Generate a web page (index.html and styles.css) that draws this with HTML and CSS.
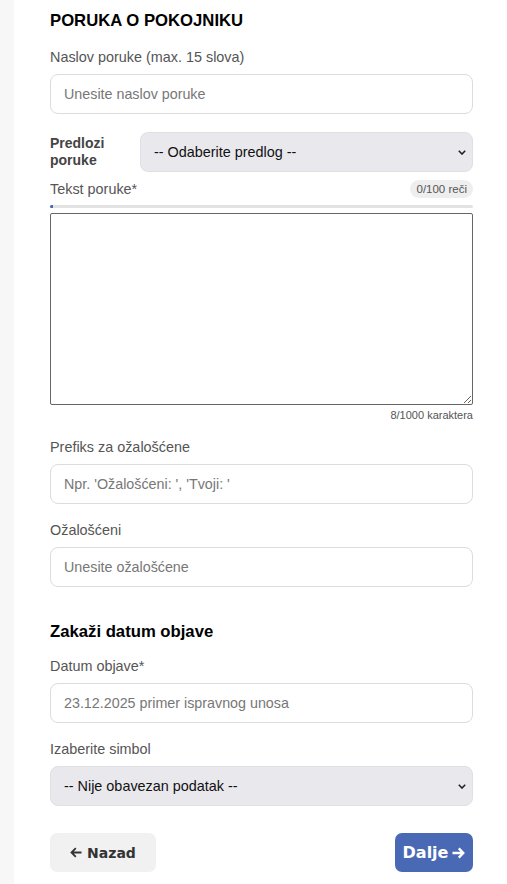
FILE: index.html
```html
<!DOCTYPE html>
<html lang="sr">
<head>
<meta charset="utf-8">
<title>Poruka o pokojniku</title>
<link rel="stylesheet" href="styles.css">
</head>
<body>
<main class="page">
  <h2 class="section-title">PORUKA O POKOJNIKU</h2>

  <div class="field">
    <label class="label">Naslov poruke (max. 15 slova)</label>
    <input class="input" type="text" placeholder="Unesite naslov poruke">
  </div>

  <div class="field row">
    <label class="label-bold">Predlozi poruke</label>
    <div class="select-wrap">
      <select class="select">
        <option>-- Odaberite predlog --</option>
      </select>
      <svg class="chev" width="8" height="5" viewBox="0 0 8 5"><polyline points="0.8,0.8 4,4 7.2,0.8" fill="none" stroke="#222" stroke-width="1.6"/></svg>
    </div>
  </div>

  <div class="field text-field">
    <div class="text-head">
      <label class="label">Tekst poruke*</label>
      <span class="badge">0/100 reči</span>
    </div>
    <div class="progress"><div class="progress-fill" style="width:3px"></div></div>
    <textarea class="textarea"></textarea>
    <div class="counter">8/1000 karaktera</div>
  </div>

  <div class="field">
    <label class="label">Prefiks za ožalošćene</label>
    <input class="input" type="text" placeholder="Npr. 'Ožalošćeni: ', 'Tvoji: '">
  </div>

  <div class="field">
    <label class="label">Ožalošćeni</label>
    <input class="input" type="text" placeholder="Unesite ožalošćene">
  </div>

  <h3 class="sub-title">Zakaži datum objave</h3>

  <div class="field">
    <label class="label">Datum objave*</label>
    <input class="input" type="text" placeholder="23.12.2025 primer ispravnog unosa">
  </div>

  <div class="field">
    <label class="label">Izaberite simbol</label>
    <div class="select-wrap">
      <select class="select">
        <option>-- Nije obavezan podatak --</option>
      </select>
      <svg class="chev" width="8" height="5" viewBox="0 0 8 5"><polyline points="0.8,0.8 4,4 7.2,0.8" fill="none" stroke="#222" stroke-width="1.6"/></svg>
    </div>
  </div>

  <div class="actions">
    <button class="btn btn-back"><svg class="arrow" width="12" height="11" viewBox="0 0 12 11"><path d="M11.5 5.5H1.5M5.8 1.2L1.5 5.5L5.8 9.8" fill="none" stroke="#333" stroke-width="1.8"/></svg>Nazad</button>
    <button class="btn btn-next">Dalje<svg class="arrow" width="13" height="12" viewBox="0 0 13 12"><path d="M0.5 6H11.3M6.8 1.4L11.3 6L6.8 10.6" fill="none" stroke="#fff" stroke-width="2.3"/></svg></button>
  </div>
</main>
</body>
</html>
```

FILE: styles.css
```css
html, body {
  margin: 0;
  padding: 0;
}
body {
  background: #f7f7f7;
  font-family: "Liberation Sans", Arial, sans-serif;
  color: #222;
}
.page {
  margin-left: 14px;
  background: #fff;
  min-height: 884px;
  box-sizing: border-box;
  padding: 11px 34px 20px 36px;
  display: flex;
  flex-direction: column;
}
.section-title {
  margin: 0 0 18px;
  font-size: 16.7px;
  line-height: 20px;
  font-weight: bold;
  color: #000;
}
.sub-title {
  margin: 17px 0 16px;
  font-size: 16.7px;
  line-height: 20px;
  font-weight: bold;
  color: #000;
}
.field {
  display: flex;
  flex-direction: column;
  gap: 8px;
  margin-bottom: 18px;
}
.label {
  font-size: 14.4px;
  line-height: 17px;
  color: #555;
}
.input {
  height: 40px;
  box-sizing: border-box;
  border: 1px solid #dcdcdc;
  border-radius: 8px;
  padding: 0 13px;
  font-family: "Liberation Sans", Arial, sans-serif;
  font-size: 14.3px;
  color: #222;
  background: #fff;
  outline: none;
}
.input::placeholder {
  color: #777;
}
.select-wrap {
  position: relative;
  display: flex;
  flex-direction: column;
}
.select {
  height: 40px;
  box-sizing: border-box;
  border: 1px solid #e0e0e4;
  border-radius: 8px;
  background-color: #e9e9ed;
  padding: 0 24px 0 13px;
  font-family: "Liberation Sans", Arial, sans-serif;
  font-size: 14.4px;
  color: #111;
  appearance: none;
  -webkit-appearance: none;
}
.chev {
  position: absolute;
  right: 7px;
  top: 18px;
  pointer-events: none;
}
.row {
  flex-direction: row;
  align-items: center;
  gap: 0;
  margin-bottom: 8px;
}
.label-bold {
  width: 90px;
  flex: none;
  font-size: 14px;
  line-height: 17px;
  font-weight: bold;
  color: #444;
}
.row .select-wrap {
  flex: 1;
}
.text-field {
  gap: 0;
  margin-bottom: 17px;
}
.text-head {
  display: flex;
  justify-content: space-between;
  align-items: center;
  height: 18px;
}
.badge {
  font-size: 11.5px;
  line-height: 18px;
  padding: 0 6px;
  border-radius: 9px;
  background: #eeeeee;
  color: #555;
}
.progress {
  margin-top: 7px;
  height: 3px;
  background: #e2e2e2;
  border-radius: 2px;
  overflow: hidden;
}
.progress-fill {
  height: 100%;
  background: #4a69b5;
}
.textarea {
  margin-top: 5px;
  height: 192px;
  box-sizing: border-box;
  border: 1px solid #666;
  border-radius: 2px;
  font-family: "Liberation Sans", Arial, sans-serif;
  font-size: 14px;
  resize: both;
}
.counter {
  margin-top: 3px;
  text-align: right;
  font-size: 11px;
  line-height: 14px;
  color: #555;
}
.actions {
  display: flex;
  justify-content: space-between;
  margin-top: 9px;
}
.btn {
  height: 39px;
  border: none;
  border-radius: 7px;
  font-family: "DejaVu Sans", Verdana, sans-serif;
  font-weight: bold;
  cursor: pointer;
  display: flex;
  align-items: center;
  justify-content: center;
  padding: 0;
}
.btn-back {
  width: 106px;
  background: #f1f1f1;
  color: #333;
  font-size: 14px;
  gap: 5px;
}
.btn-next {
  width: 78px;
  background: #4a69b5;
  color: #fff;
  font-size: 16px;
  gap: 4px;
}
```
